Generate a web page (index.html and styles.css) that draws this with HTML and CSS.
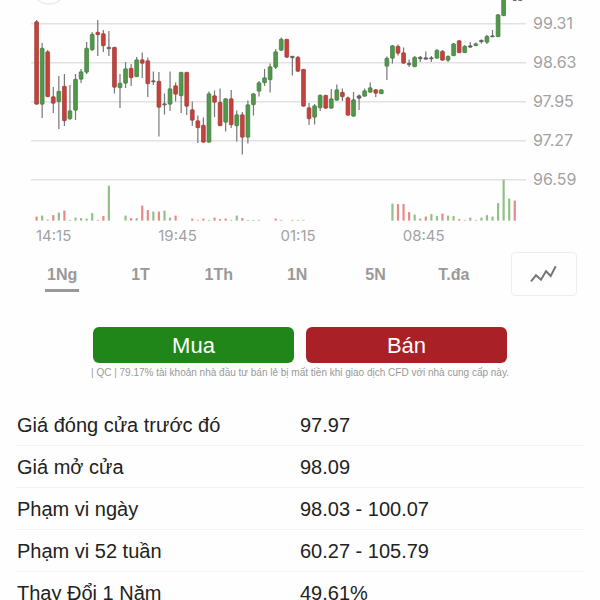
FILE: index.html
```html
<!DOCTYPE html>
<html lang="vi">
<head>
<meta charset="utf-8">
<meta name="viewport" content="width=device-width, initial-scale=1">
<title>Biểu đồ giá</title>
<link rel="stylesheet" href="styles.css">
</head>
<body>
<main>
  <section class="chart">
    <div class="plot-row">
      <svg class="plot" id="plot" viewBox="0 0 530 224" preserveAspectRatio="none" aria-hidden="true"></svg>
      <div class="prices">
        <span>99.31</span><span>98.63</span><span>97.95</span><span>97.27</span><span>96.59</span>
      </div>
    </div>
    <div class="times"><span>14:15</span><span>19:45</span><span>01:15</span><span>08:45</span></div>
  </section>

  <nav class="ranges">
    <div class="tabs">
      <button class="tab active" type="button">1Ng</button>
      <button class="tab" type="button">1T</button>
      <button class="tab" type="button">1Th</button>
      <button class="tab" type="button">1N</button>
      <button class="tab" type="button">5N</button>
      <button class="tab" type="button">T.đa</button>
    </div>
    <button class="chart-type" type="button" aria-label="Loại biểu đồ">
      <svg width="28" height="20" viewBox="0 0 28 20" aria-hidden="true"><path d="M1 17.300 6 11.300 11 15.700 16 7.200 20.700 12 25.700 2.300" fill="none" stroke="#777" stroke-width="2"/></svg>
    </button>
  </nav>

  <section class="trade">
    <div class="trade-buttons">
      <button class="buy" type="button">Mua</button>
      <button class="sell" type="button">Bán</button>
    </div>
    <p class="notice">| QC | 79.17% tài khoản nhà đầu tư bán lẻ bị mất tiền khi giao dịch CFD với nhà cung cấp này.</p>
  </section>

  <table class="stats">
    <tbody>
      <tr><th scope="row">Giá đóng cửa trước đó</th><td>97.97</td></tr>
      <tr><th scope="row">Giá mở cửa</th><td>98.09</td></tr>
      <tr><th scope="row">Phạm vi ngày</th><td>98.03 - 100.07</td></tr>
      <tr><th scope="row">Phạm vi 52 tuần</th><td>60.27 - 105.79</td></tr>
      <tr><th scope="row">Thay Đổi 1 Năm</th><td>49.61%</td></tr>
    </tbody>
  </table>
</main>
<script src="chart.js"></script>
</body>
</html>
```
FILE: styles.css
```css
* {
  box-sizing: border-box;
}

html {
  overflow-x: hidden;
}

body {
  margin: 0;
  background: #fefefe;
  color: #222;
  font-family: "Liberation Sans", Arial, sans-serif;
}

main {
  height: 100vh;
  overflow: hidden;
}

button {
  margin: 0;
  padding: 0;
  border: 0;
  background: none;
  font-family: inherit;
}

.plot-row {
  display: flex;
}

.plot {
  flex: 1;
  min-width: 0;
  height: 224px;
}

.prices {
  display: flex;
  flex-direction: column;
  width: 70px;
  padding: 4px 0 0 3px;
  color: #a2a2a2;
  font: 16px/39px Inter, sans-serif;
}

.times {
  display: grid;
  grid-template-columns: repeat(4, 1fr);
  padding: 0 75px 0 36px;
  color: #a2a2a2;
  font: 15px/24px Inter, sans-serif;
}

.ranges {
  display: flex;
  gap: 18px;
  padding: 4px 23px 0;
}

.tabs {
  display: flex;
  flex: 1;
}

.tab {
  flex: 1;
  display: flex;
  flex-direction: column;
  align-items: center;
  padding-top: 14px;
  color: #999;
  font-size: 16px;
  font-weight: bold;
  line-height: 18px;
}

.tab.active::after {
  content: "";
  width: 34px;
  height: 3px;
  margin-top: 5px;
  background: #999;
}

.chart-type {
  display: flex;
  align-items: center;
  justify-content: center;
  width: 66px;
  height: 44px;
  border: 1px solid #ededed;
  border-radius: 4px;
}

.trade {
  padding: 31px 90px 0;
}

.trade-buttons {
  display: flex;
  gap: 12px;
  padding: 0 3px;
}

.buy,
.sell {
  flex: 1;
  height: 36px;
  padding-top: 2px;
  border-radius: 6px;
  color: #fff;
  font-size: 22px;
}

.buy {
  background: #21861a;
}

.sell {
  background: #a92126;
}

.notice {
  margin: 3px 0 0;
  color: #999;
  font-size: 10px;
  line-height: 14px;
  text-align: center;
  white-space: nowrap;
}

.stats {
  width: calc(100% - 32px);
  margin: 23px 16px 0;
  border-collapse: collapse;
  table-layout: fixed;
  font-size: 20px;
  line-height: 24px;
}

.stats th,
.stats td {
  height: 42px;
  padding: 2px 0 0;
  border-bottom: 1px solid #f3f3f3;
  font-weight: normal;
  text-align: left;
}

.stats th {
  padding-left: 1px;
}
```
FILE: chart.js
```js
// Candles: slot, kind (g up, r down, k flat), high, body top, body bottom, low
const candles = `
0 r 20 21.5 104.5 104.5|1 g 43 48 104.5 118|2 r 50 51.5 97 97|3 r 87 96.5 103.5 113|4 g 76 91 102 129
5 r 74 86 121 126|6 g 85 110.5 119 120|7 g 74 79 110.5 120|8 g 69 71.5 79.5 83|9 g 42 48 72.5 74
10 g 32 34 50 51|11 r 20 32 35 56|12 r 30 33.5 46 52|13 k 31 47 49 56|14 r 47 47 87.5 93.5
15 g 74 83 88 108|16 g 62 68.5 83.5 88|17 r 64 68 78 86|18 g 57 59.5 77 77|19 r 52.5 59.5 63.5 78
20 r 57.5 60.5 84 97|21 k 71.5 80.5 82 85|22 r 72 81 107.5 136.5|23 k 93.5 103.5 105 114.5|24 g 71.5 88.5 104.5 111
25 r 82.5 85.5 94.5 101.5|26 g 72 72 96 113|27 r 72 72 106.5 115|28 r 101.5 109.5 120.5 126|29 r 115.5 120.5 128 143
30 r 117.5 125 142.5 142.5|31 g 91.5 93.5 142.5 142.5|32 r 90.5 95.5 102.5 117|33 r 88.5 102 126 126|34 g 98 98.5 122.5 131.5
35 r 90 98.5 125 128|36 g 110.5 114.5 126 141.5|37 r 112 114.5 137.5 154.5|38 g 100.5 104.5 137.5 143.5|39 g 93 93.5 105 115.5
40 g 81 82.5 91.5 96.5|41 g 69 77.5 83 86|42 g 63.5 66.5 80 92.5|43 g 49 51.5 67.5 69|44 g 37.5 39 50.5 51
45 r 39 39 57.5 58|46 k 56 56 58 75.5|47 r 56 57 71.5 72|48 r 69 69 106.5 106.5|49 r 103 107.5 119 125
50 g 104 105.5 117.5 124.5|51 g 94.5 95 108 111|52 r 95 95 108.5 108.5|53 g 89 98.5 108.5 108.5|54 g 84.5 89.5 100.5 100.5
55 r 88.5 92 97 101|56 r 96.5 97.5 115.5 115.5|57 g 92 99.5 116.5 116.5|58 k 94.5 95.5 98.5 110|59 g 88.5 90.5 96.5 96.5
60 g 82.5 87.5 92.5 92.5|61 r 89 89.5 93.5 97|62 g 89.5 89.5 94 94|63 g 56.5 58 66.5 80|64 g 45 45.5 58.5 63.5
65 r 44.5 46 53.5 55.5|66 r 47.5 52.5 63.5 63.5|67 k 59.5 63 65 67|68 g 56 57 67 67|69 k 56 57 59 62
70 k 51.5 57.5 59.5 59.5|71 k 56 57.5 59 62|72 g 49 50 58.5 58.5|73 r 50 51 60.5 60.5|74 g 55.5 56 60.5 62
75 g 43 43.5 56 56|76 r 40 40.5 53 53|77 g 45 46 53 53|78 k 42 45.5 47.5 47.5|79 g 42.5 43.5 46 46
80 k 39.5 40 42 43.5|81 g 35 36 42.5 44|82 k 30 35.5 37 37|83 g 14 14.5 37 37|84 g -3 -3 16 16
86 k -3 -3 .7 .7|87 k -3 -3 .7 .7`;

// Volume bars: slot, kind, height
const volumes = `
0 r 4|1 g 5|2 r 1|3 r 5.5|4 g 8|5 r 10|6 g .7|7 g 3|8 g 2.5|9 g 2|10 g 7.5|11 r .7|12 r 4.5|13 g 35
16 g 5|17 r 2.5|18 g 2.5|19 r 15|20 r 10.5|21 g 9|22 r 9|23 g 10|24 g 3|25 r 5|28 r 2|29 r .7
30 r 2|31 g .7|32 r 3|33 r 1.5|34 r 2|35 g .7|36 g 5|37 r 2.5|38 g .7|39 g .7|40 g .7|43 r 2|44 g .7
46 r .7|47 g .7|48 g .7|64 g 17|65 r 16.5|66 r 16.5|67 r 8.5|68 g 6|69 g 2|70 r 4|71 g 6.5|72 g 4.5
73 r 7|74 g 5|75 g 4.5|76 r 1.5|77 r .7|78 g 3|79 g .7|80 g 3|81 g 5.5|82 g 4|83 g 17.5|84 g 41|85 g 22|86 r 20`;

const parse = text => text.trim().split(/[|\n]/).map(row => row.split(' '));
const slotX = slot => 36.6 + slot * 5.56;
const body = { g: '#50984a', r: '#c5423c', k: '#666' };
const edge = { g: '#427a3c', r: '#9c3a34', k: '#555' };
const volume = { g: '#93c08a', r: '#e58a85' };

let out = '<circle cx="49" cy="-13" r="17" fill="none" stroke="#ececec" stroke-width="1.500"/>';
for (const y of [24, 63, 102, 141, 180]) {
  out += `<rect x="31" y="${y - 1}" width="495" height="1.500" fill="#e2e2e2"/>`;
}
for (const [slot, kind, height] of parse(volumes)) {
  out += `<rect x="${slotX(+slot) - 1.1}" y="${220.6 - height}" width="2.200" height="${height}" fill="${volume[kind]}"/>`;
}
for (const [slot, kind, high, top, bottom, low] of parse(candles)) {
  const x = slotX(+slot);
  out += `<rect x="${x - .6}" y="${high}" width="1.200" height="${low - high}" fill="#777"/>`;
  out += `<rect x="${x - 1.9}" y="${+top + .3}" width="3.800" height="${Math.max(bottom - top - .6, 1)}" rx=".6" fill="${body[kind]}" stroke="${edge[kind]}" stroke-width=".7"/>`;
}
document.getElementById('plot').innerHTML = out;
```
